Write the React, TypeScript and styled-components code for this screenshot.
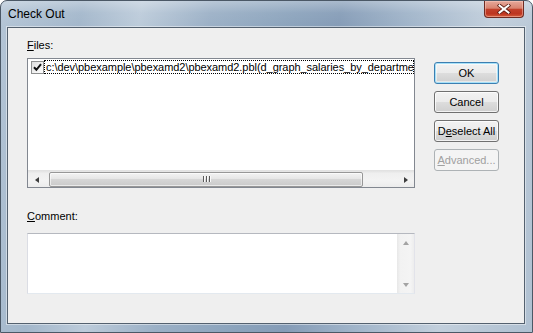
import React from 'react';
import styled, {createGlobalStyle} from 'styled-components';

const GlobalStyle = createGlobalStyle`
  html, body {
    margin: 0;
    padding: 0;
    background: #ffffff;
  }
  body {
    font-family: "Liberation Sans", Arial, sans-serif;
    font-size: 11px;
    color: #000;
  }
`;

const Window = styled.div`
  width: 533px;
  height: 333px;
  box-sizing: border-box;
  display: flex;
  flex-direction: column;
  border: 1px solid #4b5866;
  border-radius: 7px 7px 0 0;
  overflow: hidden;
  background:
    linear-gradient(180deg, rgba(255,255,255,0.3) 0%, rgba(255,255,255,0.06) 12px, rgba(255,255,255,0) 26px),
    linear-gradient(100deg, #b4c5d6 0%, #a3b7cb 14%, #bccbda 24%, #9bb0c6 36%, #8ba3bc 50%, #859cb7 58%, #a1b5ca 70%, #c2cfdc 84%, #afc0d1 100%);
`;

const TitleBar = styled.div`
  height: 26px;
  flex: none;
  display: flex;
  justify-content: space-between;
  align-items: flex-start;
  padding-left: 7px;
`;

const Title = styled.span`
  font-family: "Liberation Sans", Arial, sans-serif;
  font-size: 12px;
  line-height: 14px;
  margin-top: 6px;
  color: #000;
`;

const CloseButton = styled.div`
  width: 40px;
  height: 17px;
  margin-right: 8px;
  box-sizing: border-box;
  display: flex;
  align-items: center;
  justify-content: center;
  border: 1px solid #6e2b22;
  border-top: none;
  border-radius: 0 0 4px 4px;
  background: linear-gradient(180deg, #e6a99b 0%, #d8826f 45%, #c2402a 52%, #bd3520 80%, #d5603f 100%);
  box-shadow: inset 0 0 0 1px rgba(255, 210, 200, 0.45);
`;

const FrameBody = styled.div`
  flex: 1;
  display: flex;
  padding: 0 7px 8px 6px;
`;

const Client = styled.div`
  flex: 1;
  display: flex;
  gap: 19px;
  padding: 11px 19px 0 19px;
  background: #efefef;
  border: 1px solid #54616f;
  box-shadow: 0 0 0 1px rgba(255, 255, 255, 0.45);
`;

const MainColumn = styled.div`
  width: 388px;
  display: flex;
  flex-direction: column;
`;

const Label = styled.div<{$gapAbove?: number; $gapBelow: number}>`
  line-height: 13px;
  height: 13px;
  margin-top: ${p => p.$gapAbove ?? 0}px;
  margin-bottom: ${p => p.$gapBelow}px;
  u { text-decoration: underline; text-underline-offset: 1px; }
`;

const ListBox = styled.div`
  height: 130px;
  box-sizing: border-box;
  border: 1px solid #828790;
  background: #fff;
  display: flex;
  flex-direction: column;
`;

const Items = styled.div`
  flex: 1;
  padding: 1px 0 0 3px;
  overflow: hidden;
`;

const Row = styled.div`
  display: flex;
  align-items: center;
  height: 14px;
`;

const CheckBox = styled.div`
  width: 13px;
  height: 13px;
  flex: none;
  box-sizing: border-box;
  border: 1px solid #8e8f8f;
  background: linear-gradient(135deg, #dcdcdc 0%, #f2f2f2 60%, #ffffff 100%);
  display: flex;
  align-items: center;
  justify-content: center;
`;

const ItemText = styled.div`
  flex: 1;
  min-width: 0;
  height: 14px;
  box-sizing: border-box;
  border: 1px dotted #000;
  padding: 0 1px;
  line-height: 12px;
  letter-spacing: -0.05px;
  white-space: nowrap;
  overflow: hidden;
`;

const HScroll = styled.div`
  height: 17px;
  flex: none;
  display: flex;
  background: linear-gradient(180deg, #e3e3e3 0%, #efefef 15%, #f3f3f3 60%, #ececec 100%);
  border-top: 1px solid #e2e2e2;
  box-sizing: border-box;
`;

const ArrowButton = styled.div<{$dir: 'left' | 'right' | 'up' | 'down'; $disabled?: boolean}>`
  width: 17px;
  height: 17px;
  flex: none;
  display: flex;
  align-items: center;
  justify-content: center;
  &::after {
    content: '';
    width: 0;
    height: 0;
    border-style: solid;
    border-color: transparent;
    ${p => {
      const c = p.$disabled ? '#a3a3a3' : '#3d3d3d';
      switch (p.$dir) {
        case 'left': return `border-width: 3.5px 4px 3.5px 0; border-right-color: ${c};`;
        case 'right': return `border-width: 3.5px 0 3.5px 4px; border-left-color: ${c};`;
        case 'up': return `border-width: 0 3.5px 4px 3.5px; border-bottom-color: ${c};`;
        default: return `border-width: 4px 3.5px 0 3.5px; border-top-color: ${c};`;
      }
    }}
  }
`;

const Track = styled.div`
  flex: 1;
  display: flex;
  align-items: center;
  padding-left: 4px;
`;

const Thumb = styled.div`
  width: 314px;
  height: 15px;
  box-sizing: border-box;
  border: 1px solid #979797;
  border-radius: 2px;
  background: linear-gradient(180deg, #f3f3f3 0%, #e6e6e6 45%, #d6d6d6 50%, #cacaca 100%);
  box-shadow: inset 0 0 0 1px rgba(255, 255, 255, 0.6);
  display: flex;
  align-items: center;
  justify-content: center;
  gap: 2px;
`;

const Grip = styled.span`
  width: 1px;
  height: 6px;
  background: #5a5a5a;
  box-shadow: 1px 0 0 #fafafa;
`;

const CommentBox = styled.div`
  height: 61px;
  box-sizing: border-box;
  border: 1px solid;
  border-color: #b5b8bf #e2e3ea #e3e9ef #dbdde4;
  background: #fff;
  display: flex;
`;

const CommentText = styled.div`
  flex: 1;
`;

const VScroll = styled.div`
  width: 17px;
  display: flex;
  flex-direction: column;
  justify-content: space-between;
  background: linear-gradient(90deg, #e8e8e8 0%, #f2f2f2 20%, #f4f4f4 80%, #ededed 100%);
`;

const ButtonColumn = styled.div`
  display: flex;
  flex-direction: column;
  gap: 7px;
  padding-top: 23px;
`;

const Button = styled.div<{$variant?: 'default' | 'disabled'}>`
  width: 65px;
  height: 22px;
  box-sizing: border-box;
  border-radius: 3px;
  display: flex;
  align-items: center;
  justify-content: center;
  line-height: 13px;
  border: 1px solid ${p => p.$variant === 'default' ? '#3c7fb1' : p.$variant === 'disabled' ? '#adb2b5' : '#707070'};
  color: ${p => p.$variant === 'disabled' ? '#a0a0a0' : '#000'};
  background: ${p => p.$variant === 'disabled'
    ? '#f4f4f4'
    : 'linear-gradient(180deg, #f2f2f2 0%, #ebebeb 50%, #dddddd 51%, #cfcfcf 100%)'};
  box-shadow: ${p => p.$variant === 'disabled'
    ? 'none'
    : p.$variant === 'default'
      ? 'inset 0 0 0 1px #a7e1f9, inset 0 0 0 2px rgba(255,255,255,0.5)'
      : 'inset 0 0 0 1px rgba(255, 255, 255, 0.75)'};
  u { text-decoration: underline; text-underline-offset: 1px; }
`;

function CloseGlyph() {
  return (
    <svg width="14" height="10" viewBox="0 0 14 10">
      <path d="M2.5 1.5 L11.5 8.5 M11.5 1.5 L2.5 8.5" stroke="#5a1c12" strokeWidth="3.6" strokeLinecap="square" />
      <path d="M2.5 1.5 L11.5 8.5 M11.5 1.5 L2.5 8.5" stroke="#ffffff" strokeWidth="2" strokeLinecap="square" />
    </svg>
  );
}

function CheckMark() {
  return (
    <svg width="9" height="9" viewBox="0 0 9 9">
      <path d="M1 4.2 L3.4 6.8 L8 1.2" stroke="#111" strokeWidth="2" fill="none" />
    </svg>
  );
}

const files = ['c:\\dev\\pbexample\\pbexamd2\\pbexamd2.pbl(d_graph_salaries_by_department)'];

export default function App() {
  return (
    <>
      <GlobalStyle />
      <Window>
        <TitleBar>
          <Title>Check Out</Title>
          <CloseButton><CloseGlyph /></CloseButton>
        </TitleBar>
        <FrameBody>
          <Client>
            <MainColumn>
              <Label $gapBelow={6}><u>F</u>iles:</Label>
              <ListBox>
                <Items>
                  {files.map(f => (
                    <Row key={f}>
                      <CheckBox><CheckMark /></CheckBox>
                      <ItemText>{f}</ItemText>
                    </Row>
                  ))}
                </Items>
                <HScroll>
                  <ArrowButton $dir="left" />
                  <Track>
                    <Thumb><Grip /><Grip /><Grip /></Thumb>
                  </Track>
                  <ArrowButton $dir="right" />
                </HScroll>
              </ListBox>
              <Label $gapAbove={22} $gapBelow={10}><u>C</u>omment:</Label>
              <CommentBox>
                <CommentText />
                <VScroll>
                  <ArrowButton $dir="up" $disabled />
                  <ArrowButton $dir="down" $disabled />
                </VScroll>
              </CommentBox>
            </MainColumn>
            <ButtonColumn>
              <Button $variant="default">OK</Button>
              <Button>Cancel</Button>
              <Button>D<u>e</u>select All</Button>
              <Button $variant="disabled"><u>A</u>dvanced...</Button>
            </ButtonColumn>
          </Client>
        </FrameBody>
      </Window>
    </>
  );
}
